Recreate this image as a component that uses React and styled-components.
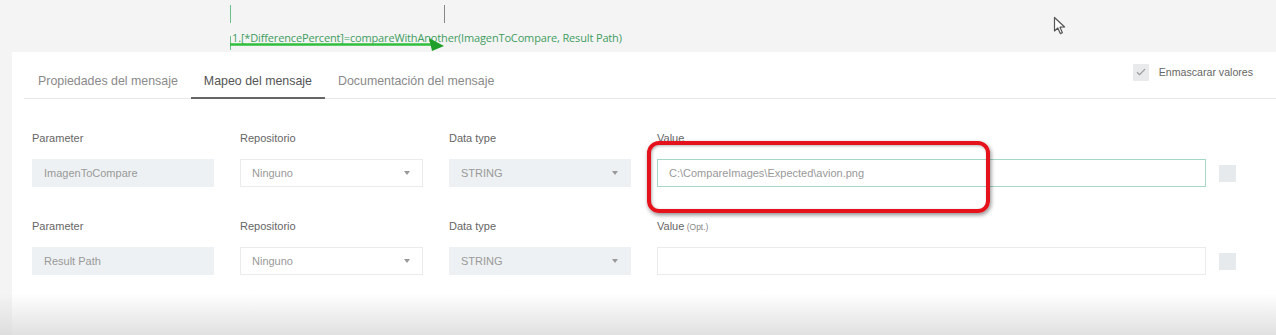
import React from 'react'
import styled, { createGlobalStyle } from 'styled-components'

const GlobalStyle = createGlobalStyle`
  html, body {
    margin: 0;
    padding: 0;
    background: #f4f4f4;
    font-family: "Liberation Sans", Arial, sans-serif;
    overflow: hidden;
  }
`

const Page = styled.div`
  position: relative;
  width: 1276px;
  height: 335px;
  background: #f4f4f4;
  overflow: hidden;
`

// flow diagram strip above the panel
const Canvas = styled.div`
  position: relative;
  height: 52px;
`

const Tick = styled.div`
  position: absolute;
  left: ${p => p.x}px;
  top: ${p => p.y}px;
  width: 1px;
  height: ${p => p.h}px;
  background: ${p => p.color};
`

const Formula = styled.div`
  position: absolute;
  left: 232px;
  top: 30px;
  font-family: "Open Sans", sans-serif;
  font-size: 11px;
  letter-spacing: -0.15px;
  color: #3f9d5f;
  white-space: nowrap;
`

const Arrow = styled.svg`
  position: absolute;
  left: 229px;
  top: 38px;
`

const Cursor = styled.svg`
  position: absolute;
  left: 1053px;
  top: 16px;
`

const Panel = styled.div`
  position: relative;
  margin-left: 12px;
  height: 283px;
  background: #fff;
`

const Header = styled.div`
  display: flex;
  align-items: flex-end;
  justify-content: space-between;
  height: 46px;
  margin-left: 12px;
  border-bottom: 1px solid #e8e8e8;
`

const Tabs = styled.div`
  display: flex;
  padding-left: 1px;
`

const Tab = styled.div`
  height: 36px;
  line-height: 36px;
  padding: 0 13px;
  margin-bottom: -1px;
  font-size: 12.4px;
  color: ${p => (p.active ? '#555' : '#8a8a8a')};
  border-bottom: 2px solid ${p => (p.active ? '#666' : 'transparent')};
  box-sizing: border-box;
`

const Mask = styled.label`
  display: flex;
  align-items: center;
  gap: 10px;
  align-self: center;
  margin-bottom: 6px;
  margin-right: 23px;
  font-size: 10.6px;
  color: #666;
`

const CheckBox = styled.span`
  display: flex;
  align-items: center;
  justify-content: center;
  width: 16px;
  height: 17px;
  background: #e9eaeb;
  border-radius: 1px;
`

const Rows = styled.div`
  display: flex;
  flex-direction: column;
  gap: 32px;
  padding: 32px 0 0 20px;
`

const Row = styled.div`
  display: grid;
  grid-template-columns: 182px 183px 182px auto;
  column-gap: 26px;
  row-gap: 14px;
`

const Label = styled.div`
  height: 14px;
  font-size: 11px;
  line-height: 14px;
  color: #666;

  small {
    font-size: 8.5px;
    color: #888;
  }
`

const Field = styled.div`
  display: flex;
  align-items: center;
  justify-content: space-between;
  height: 28px;
  padding: 0 12px 0 11px;
  box-sizing: border-box;
  font-size: 11px;
  color: #999;
  background: ${p => (p.readOnly ? '#eef1f3' : '#fff')};
  border: 1px solid ${p => (p.focused ? '#a6d7c4' : p.readOnly ? '#eef1f3' : '#ebebeb')};
  white-space: nowrap;
`

const Caret = styled.span`
  width: 0;
  height: 0;
  border-left: 3px solid transparent;
  border-right: 3px solid transparent;
  border-top: 4px solid #9a9a9a;
`

const ValueCell = styled.div`
  display: flex;
  align-items: center;
  gap: 13px;
`

const ValueField = styled(Field)`
  width: 549px;
`

const Square = styled.span`
  width: 17px;
  height: 17px;
  background: #e7eaec;
`

// red annotation drawn over the video frame
const Highlight = styled.div`
  position: absolute;
  left: 635px;
  top: 89px;
  width: 335px;
  height: 64px;
  border: 4px solid #e5121b;
  border-radius: 12px;
  box-shadow: 1px 2px 4px rgba(0, 0, 0, 0.45), inset 1px 1px 3px rgba(0, 0, 0, 0.3);
  pointer-events: none;
`

const Fade = styled.div`
  position: absolute;
  left: 0;
  right: 0;
  bottom: 0;
  height: 42px;
  background: linear-gradient(to bottom, rgba(220, 220, 220, 0), rgba(214, 214, 214, 0.75));
  pointer-events: none;
`

const rows = [
  { param: 'ImagenToCompare', value: 'C:\\CompareImages\\Expected\\avion.png', focused: true, optional: false },
  { param: 'Result Path', value: '', focused: false, optional: true },
]

export default function App() {
  return (
    <Page>
      <GlobalStyle />
      <Canvas>
        <Tick x={230} y={5} h={18} color="#6cc08a" />
        <Tick x={444} y={5} h={18} color="#888" />
        <Tick x={230} y={36} h={14} color="#6cc08a" />
        <Formula>1.[*DifferencePercent]=compareWithAnother(ImagenToCompare, Result Path)</Formula>
        <Arrow width="220" height="14" viewBox="0 0 220 14">
          <line x1="1" y1="6.5" x2="204" y2="6.5" stroke="#2fbf3c" strokeWidth="2.5" />
          <path d="M200 0 L215 8 L203 13 Z" fill="#1f9e2a" />
        </Arrow>
        <Cursor width="14" height="20" viewBox="0 0 14 20">
          <path d="M1.5 1.5 L1.5 15 L4.8 12 L7.3 17.6 L9.4 16.7 L7 11.2 L11.6 11 Z" fill="#fff" stroke="#555" strokeWidth="1.2" strokeLinejoin="round" />
        </Cursor>
      </Canvas>

      <Panel>
        <Header>
          <Tabs>
            <Tab>Propiedades del mensaje</Tab>
            <Tab active>Mapeo del mensaje</Tab>
            <Tab>Documentación del mensaje</Tab>
          </Tabs>
          <Mask>
            <CheckBox>
              <svg width="10" height="8" viewBox="0 0 10 8">
                <path d="M1 4.2 L3.6 6.6 L9 1.2" fill="none" stroke="#9a9a9a" strokeWidth="1.2" />
              </svg>
            </CheckBox>
            Enmascarar valores
          </Mask>
        </Header>

        <Rows>
          {rows.map(r => (
            <Row key={r.param}>
              <Label>Parameter</Label>
              <Label>Repositorio</Label>
              <Label>Data type</Label>
              <Label>
                Value{r.optional && <small> (Opt.)</small>}
              </Label>

              <Field readOnly>{r.param}</Field>
              <Field>
                Ninguno
                <Caret />
              </Field>
              <Field readOnly>
                STRING
                <Caret />
              </Field>
              <ValueCell>
                <ValueField focused={r.focused}>{r.value}</ValueField>
                <Square />
              </ValueCell>
            </Row>
          ))}
        </Rows>

        <Highlight />
      </Panel>
      <Fade />
    </Page>
  )
}
